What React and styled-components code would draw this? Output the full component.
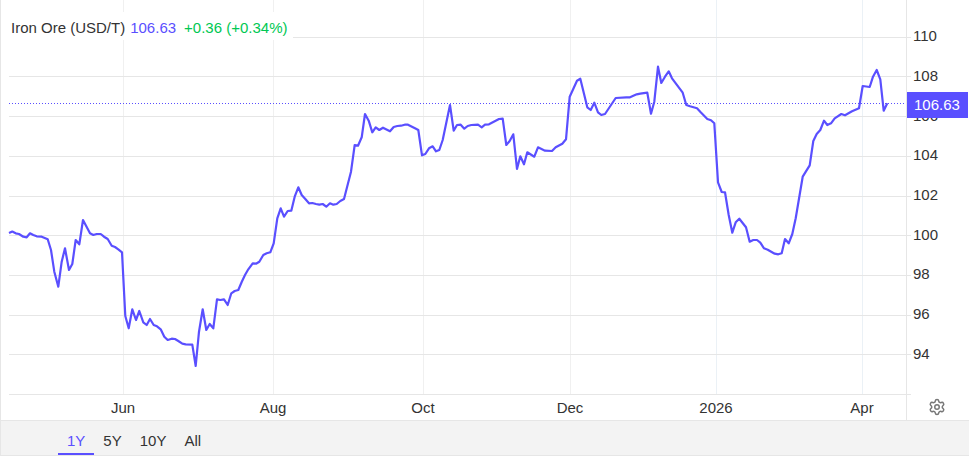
import React from "react";
import styled, { createGlobalStyle } from "styled-components";
import { Settings } from "lucide-react";

const ACCENT = "#5a4fff";

const GlobalStyle = createGlobalStyle`
  html, body { margin: 0; padding: 0; background: #fff; }
  body { font-family: "Liberation Sans", Arial, sans-serif; font-size: 15px; color: #333; }
`;

const series = [
  [9,233],[12.3,231.5],[15.7,233.3],[19,234],[23.3,236.7],[26.7,237.3],[30,233.3],[33.3,235],[36.7,236.3],[41.7,236.7],[47.7,239.3],[51,250],[54.3,271.7],[58.3,286.7],[61.7,261.7],[65,248.3],[69,270],[72.3,264],[75.7,240],[79.3,244.3],[83,220],[90,233.3],[93.3,235],[96.7,234],[100.7,234],[104,236.7],[107.7,239],[111.7,245.7],[115,247],[118.3,249.3],[122,252.3],
  [125.3,316],[128.7,328.3],[132.3,309.3],[136,320],[139.3,311],[143.3,322.3],[146.7,325],[150,319],[153.7,325],[157,326.3],[160.7,329.3],[164.3,336.7],[167.7,340],[171.7,338.7],[175,339],[178.3,341],[182.3,343.7],[185.7,344.3],[192.3,344.7],[195.7,366],[199,331.7],[202.7,309.3],[206.3,330],[209.7,324],[213.3,328.3],[217,299.3],[220.3,300],[224,299.3],[227.7,305],[231.3,293.3],[234.7,291],[238.3,290],[241.7,282],[245,275],
  [248.3,269.3],[252.7,263.3],[256,263.7],[259.3,261.7],[263.3,255],[266.7,253.3],[270.3,252.3],[273.7,243.3],[277.3,218.3],[280.7,208.3],[284,216.7],[287.7,211],[291.3,210.7],[294.7,196.7],[298.3,187.3],[301.7,195],[305.3,199],[309,203.3],[312.3,203],[316,204],[319.3,204.7],[322.7,204],[326.3,206.7],[330,203.3],[333.3,204.7],[336.7,204],[340.3,201],[344,199],[351,171.7],[354.7,145],[358,145.7],[361.7,137.3],[365,114],[368.7,120.7],[372.3,132.3],[375.7,127.3],[379.3,130],[383,127.7],[390,131.3],[393.7,127],[397.3,126],[401,125.7],[404.7,124.7],[408,124.7],[415,128.3],[418.3,130],[422,155.3],[425.3,154],[429,148.3],[432.7,146.3],[436,151.3],[439.3,150],[442.7,140],[450,105],[453.7,130.7],[457,125],[460.7,124.7],[464.3,128.7],[467.7,126],[471.3,125],[478,124.7],
  [481.7,127.3],[485,124.7],[489,124.3],[499,119],[502.7,118.7],[506.3,145],[509.7,141],[513.3,134.3],[517,169],[520.3,156.3],[524,164.3],[527.3,152.3],[534.3,156.7],[538,147.3],[545,150.7],[552,151],[555.7,147.3],[562.3,143.7],[566,139.3],[569.7,96.7],[577,80.7],[580.3,78.7],[587.3,107.3],[590.7,110],[594.3,102.7],[598,112.3],[601.3,115],[605,114],[615.7,98],[626.3,97.3],[630,97.3],[636.7,94.3],[640.3,93.7],[647.3,92.7],[651,113.7],[654.3,101.7],[658,66.7],[661.3,83],[665,76.7],[668.7,71.3],[672,78.3],[682.7,92.7],[686.3,105],[690,106.3],[697,108.3],[700.7,112.3],[707.3,119],[711,120.3],[714.3,123.3],
  [718,182.3],[721.7,192],[725,192.3],[728.7,215],[732.3,232.7],[735.7,222.3],[739.3,218.7],[746,227.3],[749.7,241.7],[753.3,240],[757,240],[760.3,242.7],[764,248.3],[767.7,249.7],[774.7,253.7],[778.3,254.3],[781.7,253.3],[785,239],[788.7,243.3],[792.3,234],[795.7,218.3],[802.7,176.7],[809.7,165.3],[813.3,141],[816.7,134],[820.3,130],[824,120.7],[827.3,125],[831,123.3],[834.7,118.3],[841.3,114],[845,115.3],[852,111.3],[859,108.3],[862.7,86],[869.7,87],[873,76.7],[876.7,70],[880.3,79.3],[883.7,110.7],[887.3,103.3],
];

const hLines = [37, 76, 116, 156, 196, 235, 275, 315, 354, 394];
const vLines = [
  { x: 123, color: "#f0f0f0" },
  { x: 273, color: "#f0f0f0" },
  { x: 423, color: "#f0f0f0" },
  { x: 570, color: "#f0f0f0" },
  { x: 716, color: "#ebf1f6" },
  { x: 862, color: "#ebf1f6" },
];
const yTicks = [110, 108, 106, 104, 102, 100, 98, 96, 94];
const months = [
  { label: "Jun", width: 150 },
  { label: "Aug", width: 150 },
  { label: "Oct", width: 150 },
  { label: "Dec", width: 144 },
  { label: "2026", width: 148 },
  { label: "Apr", width: 144 },
];
const ranges = ["1Y", "5Y", "10Y", "All"];

const Frame = styled.div`
  width: 968px;
  border-left: 1px solid #e6e6e6;
`;

const Chart = styled.div`
  display: flex;
  height: 420px;
`;

const PlotColumn = styled.div`
  width: 905px;
  flex: none;
`;

const Plot = styled.div`
  position: relative;
  height: 395px;
  padding-left: 8px;
`;

const PlotSvg = styled.svg`
  display: block;
  overflow: visible;
`;

const Legend = styled.div`
  position: absolute;
  left: 8px;
  top: 12px;
  width: 284px;
  height: 28px;
  padding: 7px 0 0 2px;
  box-sizing: border-box;
  background: #fff;
  display: flex;
  gap: 5px;
  line-height: 18px;
  white-space: nowrap;
`;

const LegendName = styled.span`
  color: #333;
`;

const LegendPrice = styled.span`
  color: ${ACCENT};
  margin-right: 3px;
`;

const LegendChange = styled.span`
  color: #00c853;
`;

const XAxis = styled.div`
  display: flex;
  height: 25px;
  padding-left: 47px;
  align-items: center;
  box-sizing: border-box;
`;

const Month = styled.span`
  flex: none;
  width: ${(p) => p.$width}px;
  text-align: center;
`;

const YAxis = styled.div`
  position: relative;
  width: 62px;
  flex: none;
  border-left: 1px solid #e6e6e6;
  padding-top: 16.4px;
  box-sizing: border-box;
`;

const YTick = styled.div`
  height: 39.67px;
  line-height: 39.67px;
  padding-left: 6px;
  color: #333;
`;

const PriceTag = styled.div`
  position: absolute;
  left: 0;
  top: 92px;
  width: 61px;
  height: 26px;
  line-height: 26px;
  padding-left: 7px;
  box-sizing: border-box;
  background: ${ACCENT};
  color: #fff;
`;

const SettingsButton = styled.div`
  position: absolute;
  left: 21px;
  top: 398px;
  color: #777;
  display: flex;
`;

const RangeBar = styled.div`
  display: flex;
  height: 34px;
  padding-left: 57px;
  background: #f3f3f3;
  border-top: 1px solid #e6e6e6;
  border-bottom: 1px solid #e6e6e6;
`;

const RangeTab = styled.div`
  height: 34px;
  line-height: 40px;
  padding: 0 9px;
  box-sizing: border-box;
  color: ${(p) => (p.$active ? ACCENT : "#333")};
  border-bottom: 2px solid ${(p) => (p.$active ? ACCENT : "transparent")};
`;

export default function App() {
  return (
    <>
      <GlobalStyle />
      <Frame>
        <Chart>
          <PlotColumn>
            <Plot>
              <PlotSvg width="897" height="395" viewBox="9 0 897 395">
                {vLines.map((v) => (
                  <line key={v.x} x1={v.x + 0.5} x2={v.x + 0.5} y1="0" y2="394" stroke={v.color} />
                ))}
                {hLines.map((y) => (
                  <line key={y} x1="9" x2="911" y1={y + 0.5} y2={y + 0.5} stroke="#e6e6e6" />
                ))}
                <line x1="9" x2="906" y1="103.5" y2="103.5" stroke={ACCENT} strokeDasharray="1 2" />
                <polyline
                  points={series.map((p) => p.join(",")).join(" ")}
                  fill="none"
                  stroke={ACCENT}
                  strokeWidth="2.2"
                  strokeLinejoin="round"
                />
              </PlotSvg>
              <Legend>
                <LegendName>Iron Ore (USD/T)</LegendName>
                <LegendPrice>106.63</LegendPrice>
                <LegendChange>+0.36 (+0.34%)</LegendChange>
              </Legend>
            </Plot>
            <XAxis>
              {months.map((m) => (
                <Month key={m.label} $width={m.width}>{m.label}</Month>
              ))}
            </XAxis>
          </PlotColumn>
          <YAxis>
            {yTicks.map((t) => (
              <YTick key={t}>{t}</YTick>
            ))}
            <PriceTag>106.63</PriceTag>
            <SettingsButton>
              <Settings size={18} strokeWidth={2} />
            </SettingsButton>
          </YAxis>
        </Chart>
        <RangeBar>
          {ranges.map((r, i) => (
            <RangeTab key={r} $active={i === 0}>{r}</RangeTab>
          ))}
        </RangeBar>
      </Frame>
    </>
  );
}
